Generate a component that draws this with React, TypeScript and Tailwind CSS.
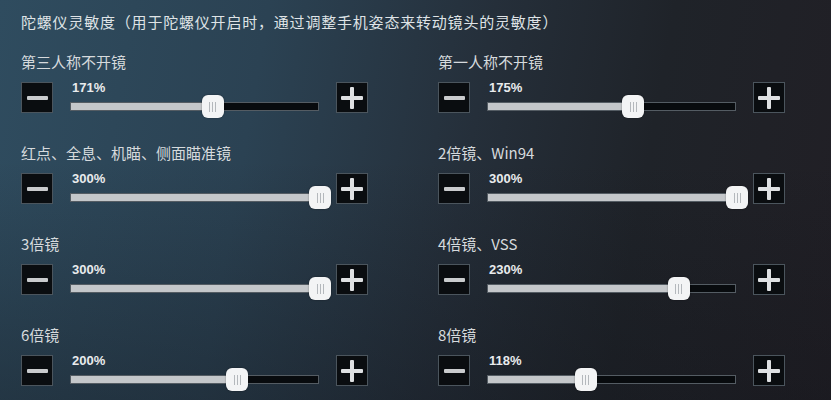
import React from 'react';

type Item = { label: string; value: number };

const items: Item[] = [
    { label: '第三人称不开镜', value: 171 },
    { label: '第一人称不开镜', value: 175 },
    { label: '红点、全息、机瞄、侧面瞄准镜', value: 300 },
    { label: '2倍镜、Win94', value: 300 },
    { label: '3倍镜', value: 300 },
    { label: '4倍镜、VSS', value: 230 },
    { label: '6倍镜', value: 200 },
    { label: '8倍镜', value: 118 },
];

const TRACK = 249;

function Minus() {
    return (
        <button className="w-[32px] h-[31px] shrink-0 bg-[#0a0d10] border border-[#4b555d] flex items-center justify-center">
            <span className="block w-[21px] h-[4px] bg-[#c9cbcd] rounded-[1px]" />
        </button>
    );
}

function Plus() {
    return (
        <button className="relative w-[32px] h-[31px] shrink-0 bg-[#0a0d10] border border-[#4b555d] flex items-center justify-center">
            <span className="absolute w-[22px] h-[4px] bg-[#dfe1e3] rounded-[1px]" />
            <span className="absolute w-[4px] h-[22px] bg-[#dfe1e3] rounded-[1px]" />
        </button>
    );
}

function Slider({ value }: { value: number }) {
    const pos = (value / 300) * TRACK;
    return (
        <div className="w-[249px] shrink-0 flex flex-col">
            <div className="h-[20px] leading-[12px] pl-[2px] text-[13px] font-bold text-[#e9ebed] font-['Liberation_Sans',sans-serif]">
                {value}%
            </div>
            <div className="relative h-[9px] bg-[#080b0e] border border-[#545c63]">
                <div className="absolute left-0 top-0 bottom-0 bg-[#c4c7ca]" style={{ width: pos }} />
                <div
                    className="absolute top-[-8px] w-[22px] h-[23px] rounded-[6px] bg-[#f3f4f5] flex items-center justify-center gap-[2px] shadow-[0_0_2px_rgba(0,0,0,0.4)]"
                    style={{ left: pos - 11 }}
                >
                    <span className="block w-[1px] h-[10px] bg-[#b4b8bc]" />
                    <span className="block w-[1px] h-[10px] bg-[#b4b8bc]" />
                    <span className="block w-[1px] h-[10px] bg-[#b4b8bc]" />
                </div>
            </div>
        </div>
    );
}

function Setting({ item }: { item: Item }) {
    return (
        <div className="flex flex-col">
            <div className="h-[20px] leading-[20px] text-[15px] text-[#d6dadd] whitespace-nowrap">{item.label}</div>
            <div className="mt-[10px] flex items-start gap-[17px]">
                <Minus />
                <Slider value={item.value} />
                <Plus />
            </div>
        </div>
    );
}

export default function App() {
    return (
        <div className="w-[831px] h-[400px] overflow-hidden font-['Noto_Sans_CJK_SC',sans-serif] bg-[linear-gradient(180deg,rgba(0,0,0,0)_40%,rgba(16,18,24,0.35)_100%),linear-gradient(100deg,#2f4c5f_0%,#2b4253_30%,#252f3a_55%,#1f2329_75%,#211f25_100%)]">
            <div className="pt-[12px] pl-[21px]">
                <div className="h-[20px] leading-[20px] text-[15px] tracking-[0.8px] text-[#dfe3e6] whitespace-nowrap">
                    陀螺仪灵敏度（用于陀螺仪开启时，通过调整手机姿态来转动镜头的灵敏度）
                </div>
                <div className="mt-[20px] grid grid-cols-[346px_347px] gap-x-[71px] gap-y-[30px]">
                    {items.map((it) => (
                        <Setting key={it.label} item={it} />
                    ))}
                </div>
            </div>
        </div>
    );
}
